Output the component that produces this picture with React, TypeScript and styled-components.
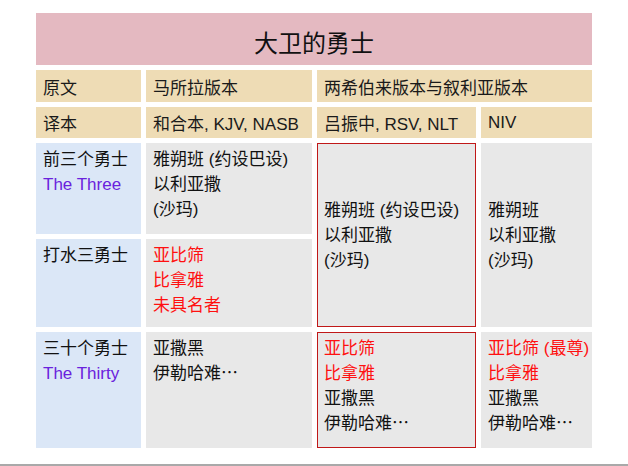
import styled, { createGlobalStyle } from "styled-components";

const GlobalStyle = createGlobalStyle`
  html, body {
    margin: 0;
    padding: 0;
    background: #ffffff;
  }
  body {
    font-family: "Liberation Sans", "Noto Sans CJK SC", sans-serif;
  }
`

type Tone = 'black' | 'red' | 'purple'

type Line = {
    text: string
    tone?: Tone
}

const toneColor: Record<Tone, string> = {
    black: '#111111',
    red: '#ff1010',
    purple: '#6a22dd',
}

const threeTop: Line[] = [
    {text: '雅朔班 (约设巴设)'},
    {text: '以利亚撒'},
    {text: '(沙玛)'},
]

const threeShort: Line[] = [
    {text: '雅朔班'},
    {text: '以利亚撒'},
    {text: '(沙玛)'},
]

const waterThree: Line[] = [
    {text: '亚比筛', tone: 'red'},
    {text: '比拿雅', tone: 'red'},
    {text: '未具名者', tone: 'red'},
]

const thirtyMasoretic: Line[] = [
    {text: '亚撒黑'},
    {text: '伊勒哈难⋯'},
]

const thirtyGreek: Line[] = [
    {text: '亚比筛', tone: 'red'},
    {text: '比拿雅', tone: 'red'},
    {text: '亚撒黑'},
    {text: '伊勒哈难⋯'},
]

const thirtyNiv: Line[] = [
    {text: '亚比筛 (最尊)', tone: 'red'},
    {text: '比拿雅', tone: 'red'},
    {text: '亚撒黑'},
    {text: '伊勒哈难⋯'},
]

const Lines = ({lines}: { lines: Line[] }) => (
    <>
        {lines.map((l, i) => (
            <TextLine key={i} $tone={l.tone || 'black'}>{l.text}</TextLine>
        ))}
    </>
)

export default function App() {
    return (
        <Page>
            <GlobalStyle/>
            <Table>
                <Title>大卫的勇士</Title>

                <HeadCell>原文</HeadCell>
                <HeadCell>马所拉版本</HeadCell>
                <HeadCell $span={2}>两希伯来版本与叙利亚版本</HeadCell>

                <HeadCell>译本</HeadCell>
                <HeadCell>和合本, KJV, NASB</HeadCell>
                <HeadCell>吕振中, RSV, NLT</HeadCell>
                <HeadCell>NIV</HeadCell>

                <LabelCell>
                    <TextLine $tone="black">前三个勇士</TextLine>
                    <TextLine $tone="purple">The Three</TextLine>
                </LabelCell>
                <BodyCell>
                    <Lines lines={threeTop}/>
                </BodyCell>
                <BodyCell $rows={2} $centered $marked>
                    <Lines lines={threeTop}/>
                </BodyCell>
                <BodyCell $rows={2} $centered>
                    <Lines lines={threeShort}/>
                </BodyCell>

                <LabelCell>
                    <TextLine $tone="black">打水三勇士</TextLine>
                </LabelCell>
                <BodyCell>
                    <Lines lines={waterThree}/>
                </BodyCell>

                <LabelCell>
                    <TextLine $tone="black">三十个勇士</TextLine>
                    <TextLine $tone="purple">The Thirty</TextLine>
                </LabelCell>
                <BodyCell>
                    <Lines lines={thirtyMasoretic}/>
                </BodyCell>
                <BodyCell $marked>
                    <Lines lines={thirtyGreek}/>
                </BodyCell>
                <BodyCell>
                    <Lines lines={thirtyNiv}/>
                </BodyCell>
            </Table>
        </Page>
    )
}

const Page = styled.div`
  width: 628px;
  height: 466px;
  box-sizing: border-box;
  padding: 13px 0 0 36px;
  border-bottom: 2px solid #a9a9a9;
  overflow: hidden;
`

const Table = styled.div`
  width: 556px;
  display: grid;
  grid-template-columns: 105px 166px 159px 111px;
  grid-template-rows: 52px 32px 31px 91px 88px 116px;
  column-gap: 5px;
  row-gap: 5px;
`

const Title = styled.div`
  grid-column: 1 / span 4;
  display: flex;
  align-items: center;
  justify-content: center;
  padding-top: 4px;
  box-sizing: border-box;
  font-size: 24px;
  color: #111111;
  background-color: #e4b9c1;
`

const HeadCell = styled.div<{ $span?: number }>`
  grid-column: span ${p => p.$span || 1};
  display: flex;
  align-items: center;
  padding: 0 7px;
  font-size: 17px;
  color: #1a1a1a;
  background-color: #eedcb5;
  white-space: nowrap;
`

const LabelCell = styled.div`
  display: flex;
  flex-direction: column;
  padding: 4px 7px;
  background-color: #dbe7f7;
`

const BodyCell = styled.div<{ $rows?: number, $centered?: boolean, $marked?: boolean }>`
  grid-row: span ${p => p.$rows || 1};
  display: flex;
  flex-direction: column;
  justify-content: ${p => p.$centered ? 'center' : 'flex-start'};
  box-sizing: border-box;
  padding: ${p => p.$marked ? '3px 6px' : '4px 7px'};
  border: ${p => p.$marked ? '1px solid #c01818' : 'none'};
  background-color: #e8e8e8;
`

const TextLine = styled.div<{ $tone: Tone }>`
  font-size: 17px;
  line-height: 25px;
  color: ${p => toneColor[p.$tone]};
  white-space: nowrap;
`
